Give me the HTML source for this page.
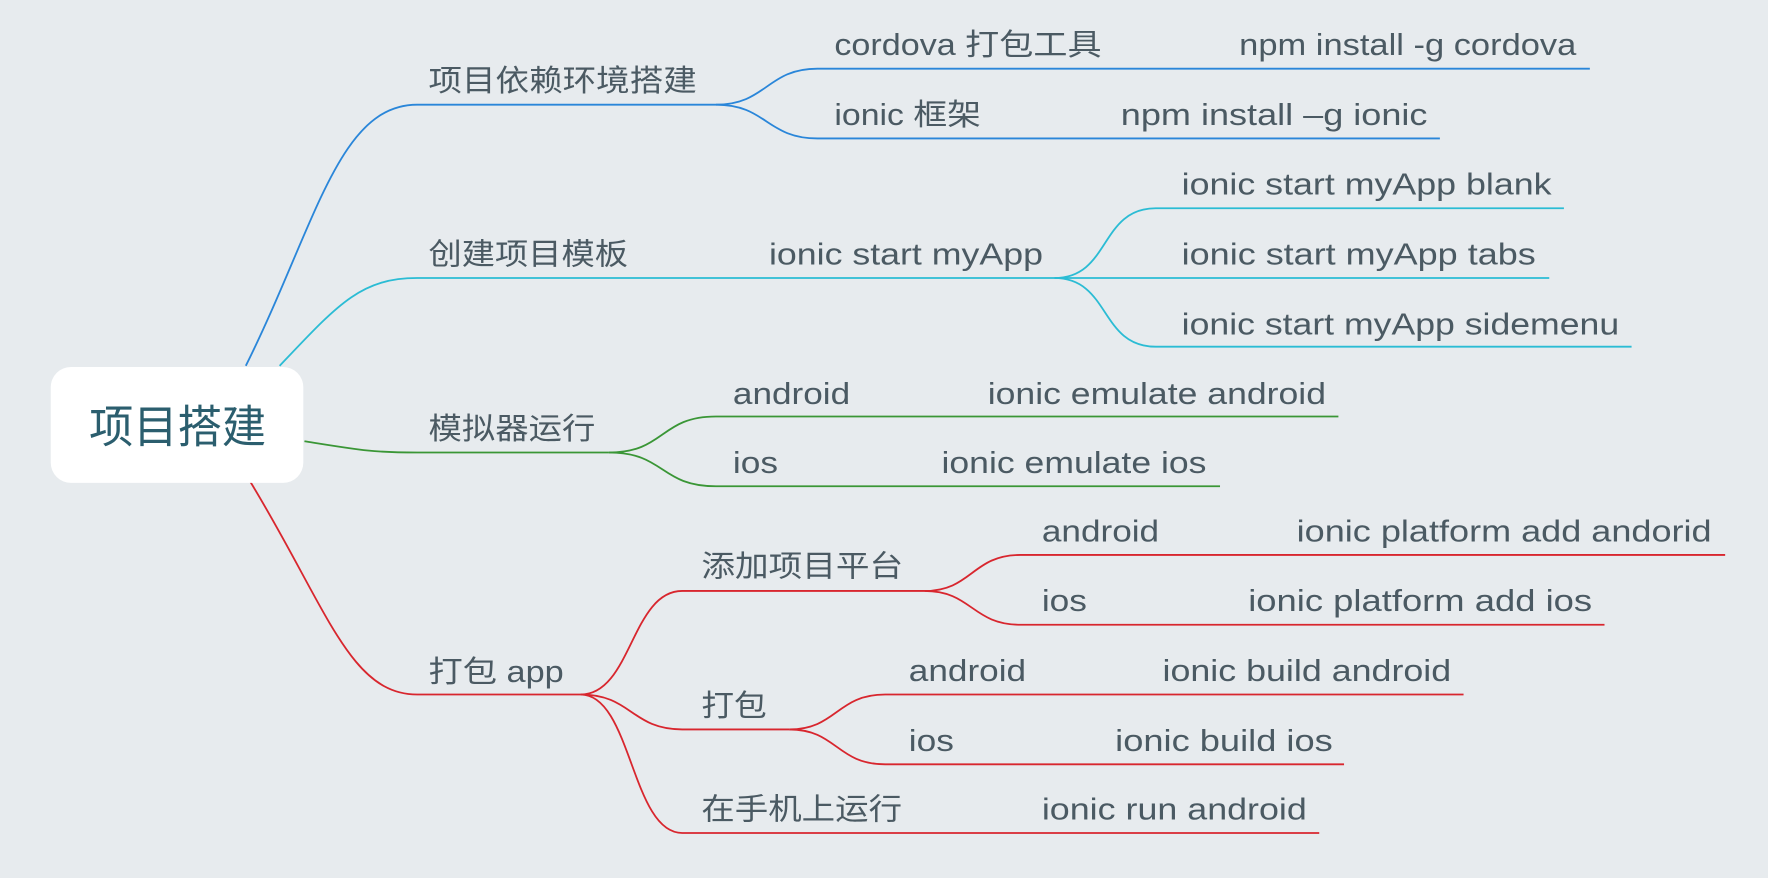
<!DOCTYPE html>
<html><head><meta charset="utf-8"><style>
html,body{margin:0;padding:0;background:#e7ebee;}
svg{display:block}
text{font-family:"Liberation Sans","Noto Sans CJK SC",sans-serif;font-size:27px;fill:#4b5a63;}
path{fill:none;stroke-width:1.6}
.b{stroke:#2a86d9}.c{stroke:#2bbcd4}.g{stroke:#3a9636}.r{stroke:#d8262e}
</style></head><body>
<svg width="1768" height="878" viewBox="0 0 1568 780" preserveAspectRatio="none" xmlns="http://www.w3.org/2000/svg">
<rect width="1568" height="780" fill="#e7ebee"/>
<!-- blue -->
<path class="b" d="M218 325 C280 200,300 93,370 93 L635 93"/>
<path class="b" d="M635 93 C680 93,680 61,725 61 L1410 61"/>
<path class="b" d="M635 93 C680 93,680 123,725 123 L1277 123"/>
<text x="380" y="81" textLength="238" lengthAdjust="spacingAndGlyphs">项目依赖环境搭建</text>
<text x="740" y="49" textLength="237" lengthAdjust="spacingAndGlyphs">cordova 打包工具</text>
<text x="1099" y="49" textLength="299" lengthAdjust="spacingAndGlyphs">npm install -g cordova</text>
<text x="740" y="111" textLength="130" lengthAdjust="spacingAndGlyphs">ionic 框架</text>
<text x="994" y="111" textLength="272" lengthAdjust="spacingAndGlyphs">npm install –g ionic</text>
<!-- cyan -->
<path class="c" d="M248 325 C300 270,320 247,370 247 L935 247"/>
<path class="c" d="M935 247 C985 247,975 185,1025 185 L1387 185"/>
<path class="c" d="M935 247 L1374 247"/>
<path class="c" d="M935 247 C985 247,975 308,1025 308 L1447 308"/>
<text x="380" y="235" textLength="177" lengthAdjust="spacingAndGlyphs">创建项目模板</text>
<text x="682" y="235" textLength="243" lengthAdjust="spacingAndGlyphs">ionic start myApp</text>
<text x="1048" y="173" textLength="328" lengthAdjust="spacingAndGlyphs">ionic start myApp blank</text>
<text x="1048" y="235" textLength="314" lengthAdjust="spacingAndGlyphs">ionic start myApp tabs</text>
<text x="1048" y="297" textLength="388" lengthAdjust="spacingAndGlyphs">ionic start myApp sidemenu</text>
<!-- green -->
<path class="g" d="M270 392 C320 400,330 402,370 402 L540 402"/>
<path class="g" d="M540 402 C590 402,585 370,635 370 L1187 370"/>
<path class="g" d="M540 402 C590 402,585 432,635 432 L1082 432"/>
<text x="380" y="390" textLength="148" lengthAdjust="spacingAndGlyphs">模拟器运行</text>
<text x="650" y="359" textLength="104" lengthAdjust="spacingAndGlyphs">android</text>
<text x="876" y="359" textLength="300" lengthAdjust="spacingAndGlyphs">ionic emulate android</text>
<text x="650" y="420" textLength="40" lengthAdjust="spacingAndGlyphs">ios</text>
<text x="835" y="420" textLength="235" lengthAdjust="spacingAndGlyphs">ionic emulate ios</text>
<!-- red -->
<path class="r" d="M222 428 C290 540,310 617,370 617 L515 617"/>
<path class="r" d="M515 617 C560 617,560 525,605 525 L820 525"/>
<path class="r" d="M515 617 C560 617,560 648,605 648 L700 648"/>
<path class="r" d="M515 617 C560 617,560 740,605 740 L1170 740"/>
<path class="r" d="M820 525 C862 525,862 493,905 493 L1530 493"/>
<path class="r" d="M820 525 C862 525,862 555,905 555 L1423 555"/>
<path class="r" d="M700 648 C742 648,742 617,785 617 L1298 617"/>
<path class="r" d="M700 648 C742 648,742 679,785 679 L1192 679"/>
<text x="380" y="606" textLength="120" lengthAdjust="spacingAndGlyphs">打包 app</text>
<text x="622" y="512" textLength="179" lengthAdjust="spacingAndGlyphs">添加项目平台</text>
<text x="622" y="636" textLength="58" lengthAdjust="spacingAndGlyphs">打包</text>
<text x="622" y="728" textLength="178" lengthAdjust="spacingAndGlyphs">在手机上运行</text>
<text x="924" y="481" textLength="104" lengthAdjust="spacingAndGlyphs">android</text>
<text x="1150" y="481" textLength="368" lengthAdjust="spacingAndGlyphs">ionic platform add andorid</text>
<text x="924" y="543" textLength="40" lengthAdjust="spacingAndGlyphs">ios</text>
<text x="1107" y="543" textLength="305" lengthAdjust="spacingAndGlyphs">ionic platform add ios</text>
<text x="806" y="605" textLength="104" lengthAdjust="spacingAndGlyphs">android</text>
<text x="1031" y="605" textLength="256" lengthAdjust="spacingAndGlyphs">ionic build android</text>
<text x="806" y="667" textLength="40" lengthAdjust="spacingAndGlyphs">ios</text>
<text x="989" y="667" textLength="193" lengthAdjust="spacingAndGlyphs">ionic build ios</text>
<text x="924" y="728" textLength="235" lengthAdjust="spacingAndGlyphs">ionic run android</text>
<!-- root -->
<rect x="45" y="326" width="224" height="103" rx="18" fill="#ffffff"/>
<text x="79" y="393" style="font-size:40px;fill:#2b5e6e" textLength="157" lengthAdjust="spacingAndGlyphs">项目搭建</text>
</svg>
</body></html>
